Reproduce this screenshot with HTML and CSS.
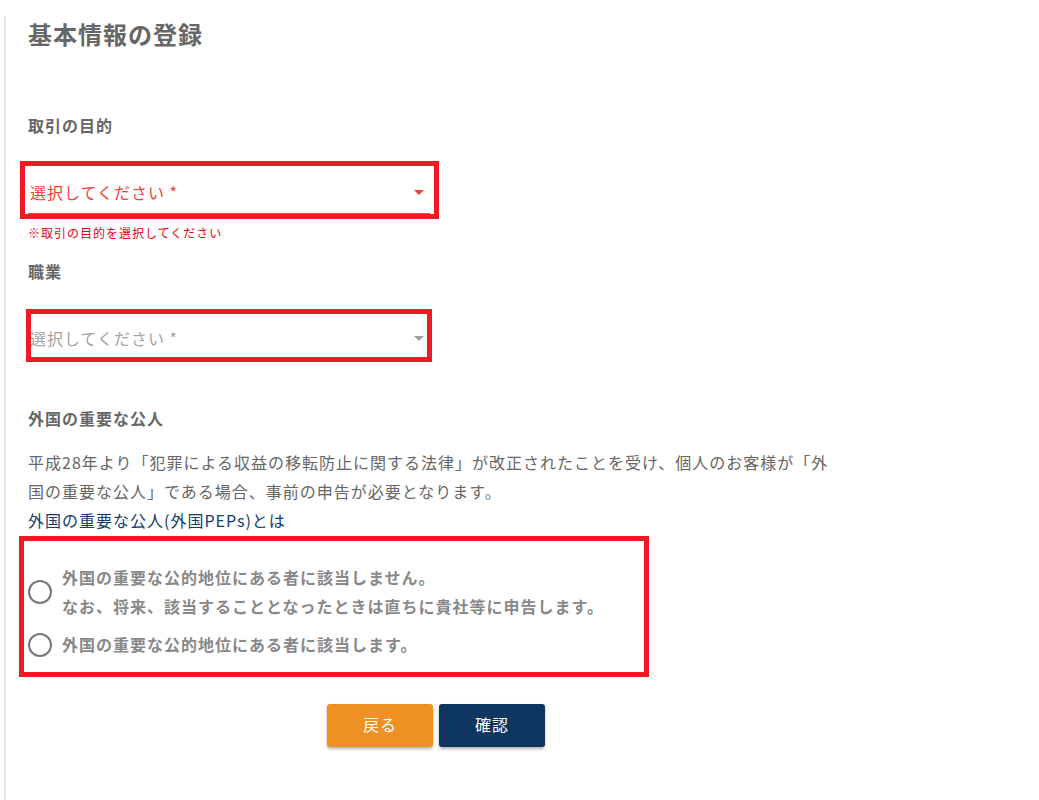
FILE: index.html
```html
<!DOCTYPE html>
<html lang="ja">
<head>
<meta charset="utf-8">
<title>基本情報の登録</title>
<link rel="stylesheet" href="styles.css">
</head>
<body>
<div class="page">
  <h1 class="title">基本情報の登録</h1>

  <h2 class="label label-first">取引の目的</h2>
  <div class="mark mark-purpose">
    <div class="select select-error">
      <span class="placeholder">選択してください *</span>
      <span class="caret"></span>
    </div>
  </div>
  <p class="error">※取引の目的を選択してください</p>

  <h2 class="label label-job">職業</h2>
  <div class="mark mark-job">
    <div class="select select-empty">
      <span class="placeholder">選択してください *</span>
      <span class="caret"></span>
    </div>
  </div>

  <h2 class="label label-peps">外国の重要な公人</h2>
  <p class="desc">平成28年より「犯罪による収益の移転防止に関する法律」が改正されたことを受け、個人のお客様が「外国の重要な公人」である場合、事前の申告が必要となります。<br><a class="link" href="#">外国の重要な公人(外国PEPs)とは</a></p>

  <div class="mark mark-radio radio-group">
    <label class="radio-row">
      <span class="radio"></span>
      <span class="radio-text">外国の重要な公的地位にある者に該当しません。<br>なお、将来、該当することとなったときは直ちに貴社等に申告します。</span>
    </label>
    <label class="radio-row radio-row-second">
      <span class="radio"></span>
      <span class="radio-text">外国の重要な公的地位にある者に該当します。</span>
    </label>
  </div>

  <div class="actions">
    <button class="btn btn-back" type="button">戻る</button>
    <button class="btn btn-confirm" type="button">確認</button>
  </div>
</div>
</body>
</html>
```

FILE: styles.css
```css
* {
  box-sizing: border-box;
}

html, body {
  margin: 0;
  padding: 0;
  background: #ffffff;
}

body {
  font-family: "Noto Sans CJK JP", "Noto Sans", "Liberation Sans", sans-serif;
  color: #666666;
  letter-spacing: 1px;
}

.page {
  margin-left: 4px;
  border-left: 2px solid #e8e8e8;
  min-height: 800px;
  padding: 0 0 0 22px;
  width: 842px;
}

.title {
  margin: 16px 0 0;
  font-size: 24px;
  line-height: 36px;
  font-weight: 700;
  color: #666666;
}

.label {
  margin: 0;
  font-size: 16px;
  line-height: 24px;
  font-weight: 700;
  color: #666666;
}

.label-first {
  margin-top: 61px;
}

.label-job {
  margin-top: 17px;
}

.label-peps {
  margin-top: 46px;
}

.mark {
  position: relative;
}

.mark::after {
  content: "";
  position: absolute;
  border: 5px solid #ed1c24;
  pointer-events: none;
}

.mark-purpose {
  margin-top: 29px;
  width: 402px;
}

.mark-purpose::after {
  top: -5px;
  left: -8px;
  right: -9px;
  bottom: -5px;
}

.mark-job {
  margin-top: 29px;
  width: 402px;
}

.mark-job::after {
  top: -3px;
  left: -2px;
  right: -2px;
  bottom: -2px;
}

.select {
  height: 48px;
  padding: 5px 6px 0 2px;
  display: flex;
  align-items: center;
  justify-content: space-between;
  font-size: 16px;
  line-height: 24px;
}

.select-error {
  color: #f2413a;
  border-bottom: 1px solid #f44336;
}

.select-empty {
  color: #a3a3a3;
  border-bottom: 1px solid #c8c8c8;
}

.caret {
  width: 0;
  height: 0;
  border-left: 5.5px solid transparent;
  border-right: 5.5px solid transparent;
  border-top: 5px solid currentColor;
}

.select-error .caret {
  border-top-color: #f44336;
}

.select-empty .caret {
  border-top-color: #9e9e9e;
}

.error {
  margin: 10px 0 0;
  font-size: 12px;
  line-height: 18px;
  color: #e60012;
}

.desc {
  margin: 18px 0 0;
  width: 816px;
  font-size: 16px;
  line-height: 29px;
  color: #666666;
}

.link {
  color: #133b6b;
  text-decoration: none;
}

.radio-group {
  margin-top: 28px;
  width: 612px;
}

.mark-radio::after {
  top: -27px;
  left: -9px;
  right: -9px;
  bottom: -18px;
}

.radio-row {
  display: flex;
  align-items: center;
  gap: 10px;
  font-size: 16px;
  line-height: 29px;
  font-weight: 700;
  color: #888888;
}

.radio-row-second {
  margin-top: 9px;
}

.radio {
  flex: 0 0 24px;
  width: 24px;
  height: 24px;
  border: 2px solid #767676;
  border-radius: 50%;
  background: #ffffff;
}

.actions {
  margin-top: 45px;
  width: 816px;
  display: flex;
  justify-content: center;
  gap: 6px;
}

.btn {
  width: 106px;
  height: 43px;
  padding: 0 0 3px;
  border: none;
  border-radius: 3px;
  font-family: inherit;
  font-size: 16px;
  line-height: 24px;
  letter-spacing: 1px;
  color: #ffffff;
  box-shadow: 0 2px 3px rgba(0, 0, 0, 0.3);
  cursor: pointer;
}

.btn-back {
  background: #ee9022;
}

.btn-confirm {
  background: #0f3660;
}
```
